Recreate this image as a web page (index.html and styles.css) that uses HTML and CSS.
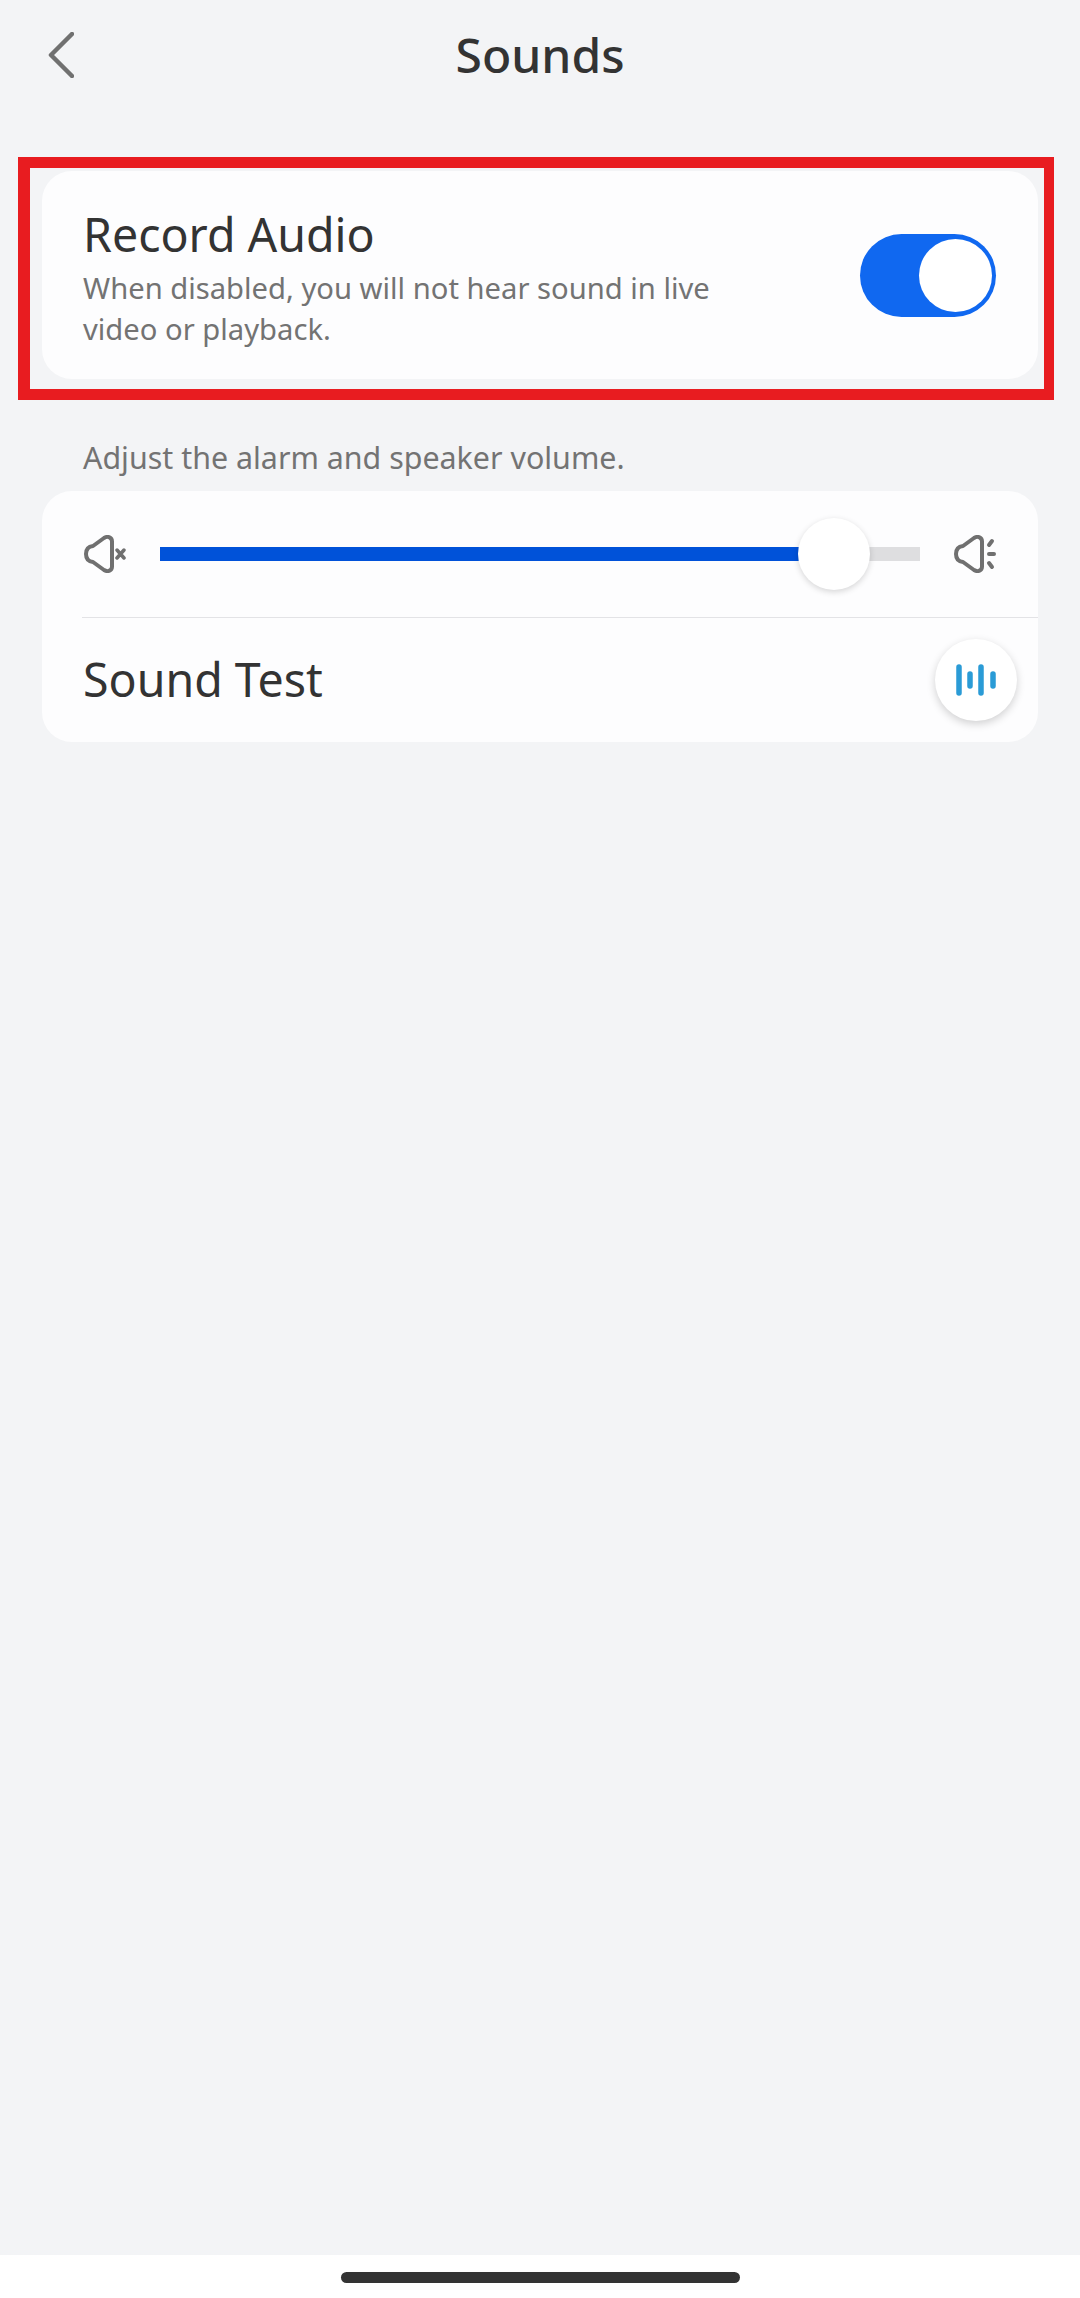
FILE: index.html
```html
<!DOCTYPE html>
<html>

<head>
    <meta charset="UTF-8">
    <title>Sounds</title>
    <link rel="stylesheet" href="styles.css">
</head>

<body>

    <div class="page">
        <div class="header">
            <svg class="back" width="26" height="46" viewBox="0 0 26 46">
                <path d="M24 2 L3 23 L24 44" fill="none" stroke="#707070" stroke-width="4.5" stroke-linecap="round" stroke-linejoin="round" />
            </svg>
            <div class="title">Sounds</div>
        </div>

        <div class="highlight">
            <div class="card record">
                <div class="record_text">
                    <div class="name">Record Audio</div>
                    <div class="desc">When disabled, you will not hear sound in live video or playback.</div>
                </div>
                <div class="toggle">
                    <div class="knob"></div>
                </div>
            </div>
        </div>

        <div class="hint">Adjust the alarm and speaker volume.</div>

        <div class="card volume">
            <div class="slider_row">
                <svg class="mute_icon" width="44" height="38" viewBox="-2 0 44 38">
                    <path d="M2 19 C2 14 5 11.500 9 11 L20 3 C24 0.500 28 2.500 28 6.500 L28 31.500 C28 35.500 24 37.500 20 35 L9 27 C5 26.500 2 24 2 19 Z" fill="none" stroke="#707070" stroke-width="4" stroke-linejoin="round" />
                    <path d="M33 15 L40 23 M40 15 L33 23" fill="none" stroke="#707070" stroke-width="3.500" stroke-linecap="round" />
                </svg>
                <div class="track">
                    <div class="fill"></div>
                    <div class="thumb"></div>
                </div>
                <svg class="loud_icon" width="42" height="38" viewBox="0 0 42 38">
                    <path d="M2 19 C2 14 5 11.500 9 11 L20 3 C24 0.500 28 2.500 28 6.500 L28 31.500 C28 35.500 24 37.500 20 35 L9 27 C5 26.500 2 24 2 19 Z" fill="none" stroke="#707070" stroke-width="4" stroke-linejoin="round" />
                    <path d="M35 10 L38 6 M35 19 L40 19 M35 28 L38 32" fill="none" stroke="#707070" stroke-width="4" stroke-linecap="round" />
                </svg>
            </div>
            <div class="test_row">
                <div class="test_name">Sound Test</div>
                <div class="test_btn">
                    <svg width="40" height="32" viewBox="0 0 40 32">
                        <path d="M3 3 L3 29 M14 10 L14 22 M25 3 L25 29 M37 10 L37 22" fill="none" stroke="#2a9bd6" stroke-width="5.500" stroke-linecap="round" />
                    </svg>
                </div>
            </div>
        </div>

        <div class="home_bar">
            <div class="home_handle"></div>
        </div>
    </div>

</body>

</html>
```

FILE: styles.css
```css
* {
    box-sizing: border-box;
}

body {
    margin: 0;
    font-family: "Noto Sans", "Liberation Sans", sans-serif;
    background-color: #f3f4f6;
}

.page {
    height: 2298px;
    display: flex;
    flex-direction: column;
    overflow: hidden;
}

.header {
    height: 110px;
    margin-bottom: 47px;
    padding-left: 48px;
    display: flex;
    align-items: center;
    position: relative;
}

.title {
    position: absolute;
    left: 0;
    right: 0;
    margin-top: -2px;
    text-align: center;
    font-size: 48px;
    font-weight: 500;
    color: #333333;
}

.highlight {
    width: 1036px;
    height: 243px;
    margin-left: 18px;
    padding: 3px 6px 10px 12px;
    border: 11px solid #e81c20;
    border-left-width: 12px;
    border-right-width: 10px;
}

.card {
    background-color: #fdfdfe;
    border-radius: 30px;
}

.record {
    height: 208px;
    padding: 0 42px 0 41px;
    display: flex;
    align-items: center;
    justify-content: space-between;
}

.record_text {
    padding-top: 4px;
}

.name {
    font-size: 46.5px;
    line-height: 60px;
    color: #333333;
}

.desc {
    width: 650px;
    margin-top: 4px;
    font-size: 29.2px;
    line-height: 41px;
    color: #737373;
}

.toggle {
    width: 136px;
    height: 83px;
    padding: 5px 4px;
    border-radius: 42px;
    background-color: #1068f0;
    display: flex;
    justify-content: flex-end;
}

.knob {
    width: 73px;
    height: 73px;
    border-radius: 50%;
    background-color: #ffffff;
}

.hint {
    margin: 37px 0 13px 83px;
    font-size: 30.4px;
    line-height: 41px;
    color: #737373;
}

.volume {
    width: 996px;
    height: 251px;
    margin-left: 42px;
}

.slider_row {
    height: 127px;
    margin-left: 40px;
    padding-right: 42px;
    border-bottom: 1px solid #e3e3e6;
    display: flex;
    align-items: center;
}

.track {
    width: 760px;
    height: 14px;
    margin: 0 34px 0 34px;
    background-color: #dedee0;
    position: relative;
}

.fill {
    width: 640px;
    height: 14px;
    background-color: #0052d9;
}

.thumb {
    position: absolute;
    left: 638px;
    top: -29px;
    width: 72px;
    height: 72px;
    border-radius: 50%;
    background-color: #ffffff;
    box-shadow: 0 2px 6px rgba(0, 0, 0, 0.16);
}

.test_row {
    height: 124px;
    padding: 0 21px 0 41px;
    display: flex;
    align-items: center;
    justify-content: space-between;
}

.test_name {
    margin-top: -2px;
    font-size: 46.5px;
    color: #333333;
}

.test_btn {
    width: 82px;
    height: 82px;
    border-radius: 50%;
    background-color: #ffffff;
    box-shadow: 0 3px 8px rgba(0, 0, 0, 0.18);
    display: flex;
    align-items: center;
    justify-content: center;
}

.home_bar {
    height: 43px;
    margin-top: auto;
    padding-top: 17px;
    background-color: #ffffff;
    display: flex;
    justify-content: center;
}

.home_handle {
    width: 399px;
    height: 11px;
    border-radius: 6px;
    background-color: #333333;
}
```
